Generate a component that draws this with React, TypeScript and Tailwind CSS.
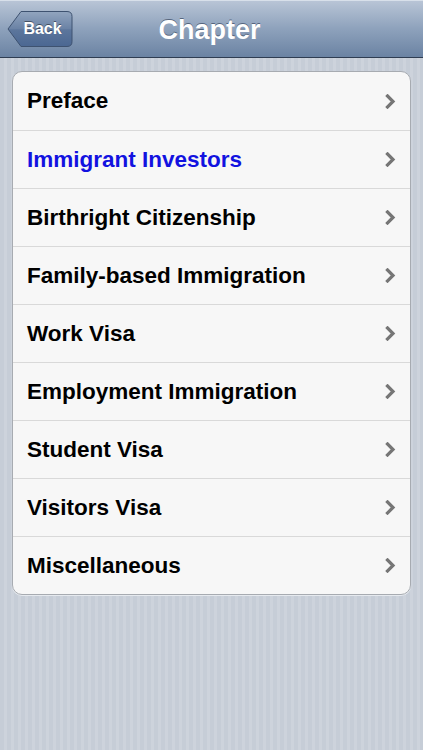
const CHAPTERS = [
  "Preface",
  "Immigrant Investors",
  "Birthright Citizenship",
  "Family-based Immigration",
  "Work Visa",
  "Employment Immigration",
  "Student Visa",
  "Visitors Visa",
  "Miscellaneous",
];

const Chevron = () => (
  <svg width="11" height="15" viewBox="0 0 11 15" className="shrink-0">
    <polyline
      points="2.5,2 8,7.5 2.5,13"
      fill="none"
      stroke="#767676"
      strokeWidth="3.2"
      strokeLinecap="square"
      strokeLinejoin="miter"
    />
  </svg>
);

const BackButton = () => (
  <button className="relative ml-[7px] mt-[10px] h-[38px] w-[66px] shrink-0">
    <svg width="66" height="38" viewBox="0 0 66 38" className="absolute inset-0">
      <defs>
        <linearGradient id="backGrad" x1="0" y1="0" x2="0" y2="1">
          <stop offset="0" stopColor="#92a5bf" />
          <stop offset="0.5" stopColor="#6a82a5" />
          <stop offset="0.52" stopColor="#5c769c" />
          <stop offset="1" stopColor="#4b6792" />
        </linearGradient>
      </defs>
      <path
        d="M1 19 L14 1.5 H60 Q65 1.5 65 6.5 V31.5 Q65 36.5 60 36.5 H14 Z"
        fill="url(#backGrad)"
        stroke="#3e5270"
        strokeWidth="1"
      />
    </svg>
    <span className="relative block pl-[5px] text-[16px] font-bold text-white [font-family:'Liberation_Sans',Arial,sans-serif] [text-shadow:0_-1px_0_rgba(0,0,0,0.45)]">
      Back
    </span>
  </button>
);

export default function App() {
  return (
    <div className="h-[750px] w-[423px] overflow-hidden bg-[repeating-linear-gradient(90deg,#c6cdd7_0px,#c6cdd7_4px,#cdd3dc_4px,#cdd3dc_7px)] [font-family:'Liberation_Sans',Arial,sans-serif]">
      <header className="relative flex h-[58px] border-b border-[#2f3d52] bg-[linear-gradient(#bac6d7,#8ea2bc_50%,#6b83a3)] shadow-[inset_0_1px_0_#d8e0ea]">
        <BackButton />
        <h1 className="pointer-events-none absolute inset-x-0 top-[10px] pr-[4px] text-center text-[27px] font-bold text-white [text-shadow:0_-1px_0_rgba(40,55,80,0.6)]">
          Chapter
        </h1>
      </header>

      <ul className="mx-[12px] mt-[13px] overflow-hidden rounded-[10px] border border-[#a7abb1] bg-[#f7f7f7] shadow-[0_1px_0_#e6eaef]">
        {CHAPTERS.map((title, i) => (
          <li
            key={title}
            className={`flex h-[58px] items-center justify-between pl-[14px] pr-[14px] ${
              i > 0 ? "border-t border-[#d9d9d9]" : ""
            }`}
          >
            <span
              className={`text-[22.5px] font-bold ${
                i === 1 ? "text-[#1212e0]" : "text-black"
              }`}
            >
              {title}
            </span>
            <Chevron />
          </li>
        ))}
      </ul>
    </div>
  );
}
